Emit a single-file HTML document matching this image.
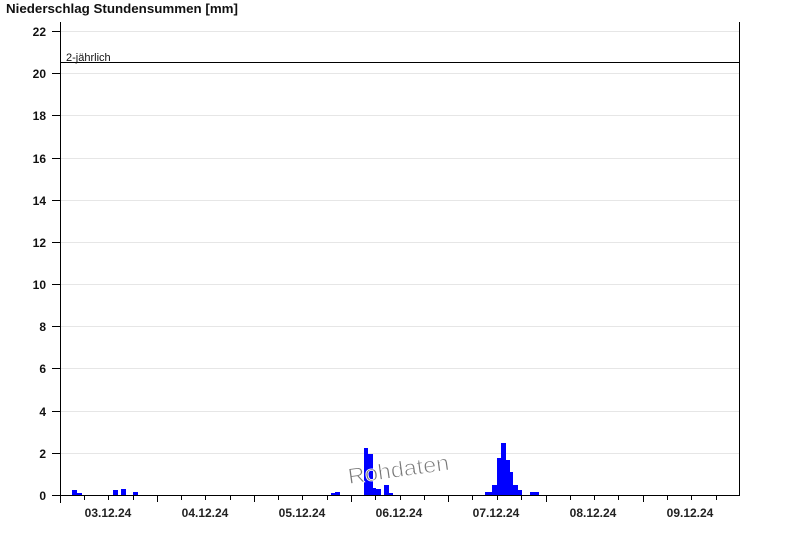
<!DOCTYPE html>
<html><head><meta charset="utf-8"><style>
html,body{margin:0;padding:0;background:#fff;}
svg{display:block;font-family:"Liberation Sans",Arial,sans-serif;}
</style></head><body>
<svg width="800" height="550" xmlns="http://www.w3.org/2000/svg">
<text x="6" y="13" font-size="13" font-weight="bold" fill="#111" textLength="232" lengthAdjust="spacingAndGlyphs">Niederschlag Stundensummen [mm]</text>
<g stroke="#e6e6e6" stroke-width="1">
<line x1="60" x2="740" y1="31.5" y2="31.5"/><line x1="60" x2="740" y1="73.5" y2="73.5"/>
<line x1="60" x2="740" y1="115.5" y2="115.5"/><line x1="60" x2="740" y1="158.5" y2="158.5"/>
<line x1="60" x2="740" y1="200.5" y2="200.5"/><line x1="60" x2="740" y1="242.5" y2="242.5"/>
<line x1="60" x2="740" y1="284.5" y2="284.5"/><line x1="60" x2="740" y1="326.5" y2="326.5"/>
<line x1="60" x2="740" y1="368.5" y2="368.5"/><line x1="60" x2="740" y1="411.5" y2="411.5"/>
<line x1="60" x2="740" y1="453.5" y2="453.5"/>
</g>
<g stroke="#000" stroke-width="1">
<line x1="52" x2="60" y1="31.5" y2="31.5"/><line x1="52" x2="60" y1="73.5" y2="73.5"/>
<line x1="52" x2="60" y1="115.5" y2="115.5"/><line x1="52" x2="60" y1="158.5" y2="158.5"/>
<line x1="52" x2="60" y1="200.5" y2="200.5"/><line x1="52" x2="60" y1="242.5" y2="242.5"/>
<line x1="52" x2="60" y1="284.5" y2="284.5"/><line x1="52" x2="60" y1="326.5" y2="326.5"/>
<line x1="52" x2="60" y1="368.5" y2="368.5"/><line x1="52" x2="60" y1="411.5" y2="411.5"/>
<line x1="52" x2="60" y1="453.5" y2="453.5"/><line x1="52" x2="60" y1="495.5" y2="495.5"/>
</g>
<g font-size="12" font-weight="bold" fill="#111" text-anchor="end">
<text x="46" y="36">22</text><text x="46" y="78">20</text><text x="46" y="120">18</text>
<text x="46" y="163">16</text><text x="46" y="205">14</text><text x="46" y="247">12</text>
<text x="46" y="289">10</text><text x="46" y="331">8</text><text x="46" y="373">6</text>
<text x="46" y="416">4</text><text x="46" y="458">2</text><text x="46" y="500">0</text>
</g>
<g fill="#0000ff">
<rect x="72" y="490" width="5" height="5"/><rect x="77" y="493" width="5" height="2"/>
<rect x="113" y="490" width="5" height="5"/><rect x="121" y="489" width="5" height="6"/>
<rect x="133" y="492" width="5" height="3"/>
<rect x="331" y="493" width="4" height="2"/><rect x="335" y="492" width="5" height="3"/>
<rect x="364" y="448" width="4" height="47"/><rect x="368" y="454" width="5" height="41"/>
<rect x="373" y="488" width="3" height="7"/><rect x="376" y="489" width="5" height="6"/>
<rect x="384" y="485" width="5" height="10"/><rect x="389" y="493" width="4" height="2"/>
<rect x="485" y="492" width="7" height="3"/><rect x="492" y="485" width="5" height="10"/>
<rect x="497" y="458" width="4" height="37"/><rect x="501" y="443" width="5" height="52"/>
<rect x="506" y="460" width="4" height="35"/><rect x="510" y="472" width="3" height="23"/>
<rect x="513" y="485" width="5" height="10"/><rect x="518" y="490" width="4" height="5"/>
<rect x="530" y="492" width="9" height="3"/>
</g>
<line x1="60" x2="740" y1="62.5" y2="62.5" stroke="#000"/>
<text x="66" y="61" font-size="11" fill="#111">2-jährlich</text>
<g stroke="#000" stroke-width="1" fill="none">
<line x1="60.5" x2="60.5" y1="22" y2="503"/>
<line x1="739.5" x2="739.5" y1="22" y2="495"/>
<line x1="60" x2="740" y1="495.5" y2="495.5"/>
</g>
<g stroke="#000">
<line x1="60.5" x2="60.5" y1="495" y2="502"/><line x1="84.5" x2="84.5" y1="495" y2="500"/><line x1="108.5" x2="108.5" y1="495" y2="500"/><line x1="133.5" x2="133.5" y1="495" y2="500"/>
<line x1="157.5" x2="157.5" y1="495" y2="502"/><line x1="181.5" x2="181.5" y1="495" y2="500"/><line x1="205.5" x2="205.5" y1="495" y2="500"/><line x1="230.5" x2="230.5" y1="495" y2="500"/>
<line x1="254.5" x2="254.5" y1="495" y2="502"/><line x1="278.5" x2="278.5" y1="495" y2="500"/><line x1="302.5" x2="302.5" y1="495" y2="500"/><line x1="327.5" x2="327.5" y1="495" y2="500"/>
<line x1="351.5" x2="351.5" y1="495" y2="502"/><line x1="375.5" x2="375.5" y1="495" y2="500"/><line x1="400.5" x2="400.5" y1="495" y2="500"/><line x1="424.5" x2="424.5" y1="495" y2="500"/>
<line x1="448.5" x2="448.5" y1="495" y2="502"/><line x1="472.5" x2="472.5" y1="495" y2="500"/><line x1="497.5" x2="497.5" y1="495" y2="500"/><line x1="521.5" x2="521.5" y1="495" y2="500"/>
<line x1="546.5" x2="546.5" y1="495" y2="502"/><line x1="570.5" x2="570.5" y1="495" y2="500"/><line x1="594.5" x2="594.5" y1="495" y2="500"/><line x1="618.5" x2="618.5" y1="495" y2="500"/>
<line x1="643.5" x2="643.5" y1="495" y2="502"/><line x1="667.5" x2="667.5" y1="495" y2="500"/><line x1="691.5" x2="691.5" y1="495" y2="500"/><line x1="716.5" x2="716.5" y1="495" y2="500"/>
</g>
<g font-size="12" font-weight="bold" fill="#222" text-anchor="middle">
<text x="108" y="517">03.12.24</text><text x="205" y="517">04.12.24</text><text x="302" y="517">05.12.24</text>
<text x="399" y="517">06.12.24</text><text x="496" y="517">07.12.24</text><text x="593" y="517">08.12.24</text>
<text x="690" y="517">09.12.24</text>
</g>
<text x="349" y="484" font-size="22" fill="#777" stroke="#fff" stroke-width="0.8" transform="rotate(-8 349 484)" textLength="102" lengthAdjust="spacingAndGlyphs">Rohdaten</text>
</svg>
</body></html>
